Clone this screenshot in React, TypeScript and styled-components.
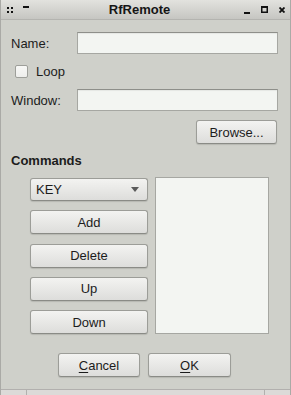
import React from "react";
import styled, { createGlobalStyle } from "styled-components";

const Global = createGlobalStyle`
  html, body {
    margin: 0;
    padding: 0;
    background: #cfd0ca;
  }
  * { box-sizing: border-box; }
`;

const Window = styled.div`
  width: 291px;
  height: 395px;
  display: flex;
  flex-direction: column;
  background: #cfd0ca;
  border-left: 1px solid #aaaaa6;
  border-right: 1px solid #aaaaa6;
  font-family: "Liberation Sans", Arial, sans-serif;
  font-size: 13px;
  color: #1c1c1c;
  overflow: hidden;
`;

const TitleBar = styled.div`
  height: 20px;
  flex: none;
  display: flex;
  align-items: center;
  padding: 0 5px 0 6px;
  background: linear-gradient(#e2e2de, #c6c6c2);
  border-bottom: 1px solid #b4b4b0;
`;

const TitleText = styled.div`
  flex: 1;
  text-align: center;
  font-weight: bold;
  font-size: 13px;
  color: #151515;
  padding-left: 6px;
`;

const TitleIcons = styled.div`
  display: flex;
  align-items: center;
  gap: ${(p: { $gap: number }) => p.$gap}px;
`;

const Content = styled.div`
  flex: 1;
  display: flex;
  flex-direction: column;
  padding: 12px 12px 0 10px;
`;

const FieldRow = styled.div`
  display: flex;
  align-items: center;
  height: ${(p: { $h: number }) => p.$h}px;
`;

const Label = styled.div`
  width: 66px;
  flex: none;
`;

const TextInput = styled.div`
  flex: 1;
  height: 22px;
  background: #f3f5f2;
  border: 1px solid #a6a7a2;
  border-top-color: #8e8f8a;
  box-shadow: inset 0 1px 1px rgba(0, 0, 0, 0.06);
`;

const CheckBox = styled.div`
  width: 13px;
  height: 13px;
  margin: 0 8px 0 4px;
  background: linear-gradient(#f8f8f6, #eeeeec);
  border: 1px solid #9e9f9a;
  border-radius: 2px;
`;

const BrowseRow = styled.div`
  display: flex;
  justify-content: flex-end;
  padding-right: 1px;
  margin-top: 9px;
`;

const Button = styled.div<{ $w?: number }>`
  width: ${(p) => (p.$w ? `${p.$w}px` : "auto")};
  height: 24px;
  display: flex;
  align-items: center;
  justify-content: center;
  background: linear-gradient(#f3f3f1, #dddddb);
  border: 1px solid #9c9d98;
  border-bottom-color: #8a8b86;
  border-radius: 3px;
  box-shadow: 0 1px 1px rgba(0, 0, 0, 0.12);
  color: #1c1c1c;
`;

const Heading = styled.div`
  margin-top: 9px;
  font-weight: bold;
  line-height: 15px;
`;

const CommandArea = styled.div`
  display: flex;
  gap: 7px;
  margin-top: 9px;
  padding-left: 19px;
  height: 157px;
`;

const ButtonColumn = styled.div`
  width: 118px;
  display: flex;
  flex-direction: column;
  justify-content: space-between;
  padding: 1px 0 0;
`;

const Combo = styled(Button)`
  justify-content: space-between;
  padding: 0 8px 0 5px;
  height: 23px;
`;

const ListBox = styled.div`
  width: 114px;
  background: #f3f5f2;
  border: 1px solid #a6a7a2;
`;

const DialogButtons = styled.div`
  display: flex;
  justify-content: center;
  gap: 8px;
  margin-top: 19px;
`;

const Mnemonic = styled.span`
  text-decoration: underline;
  text-underline-offset: 2px;
`;

const FrameBottom = styled.div`
  height: 6px;
  flex: none;
  display: grid;
  grid-template-columns: 25px 1fr 26px;
  background: #dcdad8;
  border-top: 1px solid #b2b0ae;
  & > div + div {
    border-left: 1px solid #b2b0ae;
  }
`;

export default function App() {
  return (
    <>
      <Global />
      <Window>
        <TitleBar>
          <TitleIcons $gap={10}>
            <svg width="6" height="6" viewBox="0 0 6 6">
              <rect x="0" y="0" width="2" height="2" fill="#111" />
              <rect x="4" y="0" width="2" height="2" fill="#111" />
              <rect x="0" y="4" width="2" height="2" fill="#111" />
              <rect x="4" y="4" width="2" height="2" fill="#111" />
            </svg>
            <svg width="6" height="6" viewBox="0 0 6 6" style={{ marginTop: -4 }}>
              <rect x="0" y="1" width="6" height="2" fill="#111" />
            </svg>
          </TitleIcons>
          <TitleText>RfRemote</TitleText>
          <TitleIcons $gap={11}>
            <svg width="6" height="6" viewBox="0 0 6 6" style={{ marginTop: 4 }}>
              <rect x="0" y="3" width="6" height="2" fill="#111" />
            </svg>
            <svg width="7" height="7" viewBox="0 0 7 7">
              <rect x="0.75" y="0.75" width="5.5" height="5.5" fill="none" stroke="#111" strokeWidth="1.5" />
              <rect x="0" y="0" width="7" height="2" fill="#111" />
            </svg>
            <svg width="6" height="6" viewBox="0 0 6 6">
              <path d="M0.5 0.5 L5.5 5.5 M5.5 0.5 L0.5 5.5" stroke="#111" strokeWidth="1.8" />
            </svg>
          </TitleIcons>
        </TitleBar>

        <Content>
          <FieldRow $h={22}>
            <Label>Name:</Label>
            <TextInput />
          </FieldRow>
          <FieldRow $h={35}>
            <CheckBox />
            <span>Loop</span>
          </FieldRow>
          <FieldRow $h={22}>
            <Label>Window:</Label>
            <TextInput />
          </FieldRow>
          <BrowseRow>
            <Button $w={81}>Browse...</Button>
          </BrowseRow>

          <Heading>Commands</Heading>
          <CommandArea>
            <ButtonColumn>
              <Combo>
                <span>KEY</span>
                <svg width="8" height="5" viewBox="0 0 8 5">
                  <path d="M0 0 L8 0 L4 5 Z" fill="#5a5a5a" />
                </svg>
              </Combo>
              <Button>Add</Button>
              <Button>Delete</Button>
              <Button>Up</Button>
              <Button>Down</Button>
            </ButtonColumn>
            <ListBox />
          </CommandArea>

          <DialogButtons>
            <Button $w={82}>
              <Mnemonic>C</Mnemonic>ancel
            </Button>
            <Button $w={83}>
              <Mnemonic>O</Mnemonic>K
            </Button>
          </DialogButtons>
        </Content>

        <FrameBottom>
          <div />
          <div />
          <div />
        </FrameBottom>
      </Window>
    </>
  );
}
